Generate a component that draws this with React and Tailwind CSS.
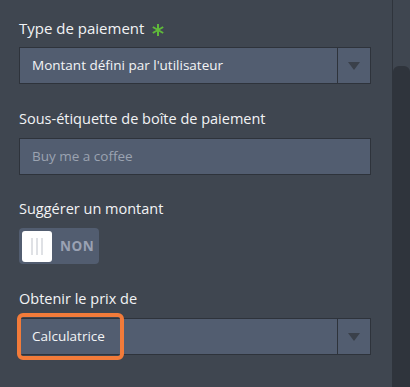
import React from "react"

const font = { fontFamily: '"Open Sans", "Noto Sans", sans-serif' }

function Arrow() {
  return (
    <div className="w-[33px] h-full border-l border-[#2e333b] flex items-center justify-center">
      <svg width="12" height="8" viewBox="0 0 12 8">
        <path d="M0 0h12L6 8z" fill="#3a404a" />
      </svg>
    </div>
  )
}

function Label({ children }) {
  return <div className="h-5 leading-5 text-[14.5px] text-[#f2f3f5] mb-[9px] flex items-center">{children}</div>
}

export default function App() {
  return (
    <div className="w-[410px] h-[387px] bg-[#3f4650] flex overflow-hidden" style={font}>
      <div className="w-[392px] pl-[19px] pr-[21px] pt-[18px]">
        {/* Type de paiement */}
        <Label>
          <span className="text-[15px]">Type de paiement</span>
          <svg className="ml-[8px] mt-[3px]" width="12" height="12" viewBox="0 0 12 12">
            <g stroke="#5fb93a" strokeWidth="2" strokeLinecap="butt">
              <path d="M6 0v12" />
              <path d="M0.8 3l10.4 6" />
              <path d="M0.8 9l10.4-6" />
            </g>
          </svg>
        </Label>
        <div className="h-[37px] bg-[#525d70] border border-[#2e333b] flex items-center">
          <div className="flex-1 pl-3 text-[13.5px] text-[#f3f4f6]">Montant défini par l'utilisateur</div>
          <Arrow />
        </div>

        {/* Sous-étiquette */}
        <div className="mt-[25px]">
          <Label>Sous-étiquette de boîte de paiement</Label>
          <div className="h-[37px] bg-[#525d70] border border-[#2e333b] flex items-center pl-3 text-[13.5px] text-[#9ba3b1]">
            Buy me a coffee
          </div>
        </div>

        {/* Suggérer */}
        <div className="mt-[24px]">
          <Label>Suggérer un montant</Label>
          <div className="w-20 h-9 bg-[#525d70] rounded-[4px] flex items-center px-[3px]">
            <div className="w-[30px] h-[31px] bg-white rounded-[3px] flex items-center justify-center gap-[3px]">
              <div className="w-[2px] h-[17px] bg-[#dfe1e5]" />
              <div className="w-[2px] h-[17px] bg-[#dfe1e5]" />
              <div className="w-[2px] h-[17px] bg-[#dfe1e5]" />
            </div>
            <div className="ml-[8px] text-[13.5px] font-bold tracking-[0.5px] text-[#9aa2b3]">NON</div>
          </div>
        </div>

        {/* Obtenir le prix */}
        <div className="mt-[25px]">
          <Label>Obtenir le prix de</Label>
          <div className="relative h-[37px] bg-[#525d70] border border-[#2e333b] flex items-center">
            <div className="flex-1 pl-3 text-[13.5px] text-[#f3f4f6]">Calculatrice</div>
            <Arrow />
            <div className="absolute left-[-3px] top-[-6px] w-[107px] h-[47px] border-4 border-[#f27b3a] rounded-[6px]" />
          </div>
        </div>
      </div>

      {/* Scrollbar */}
      <div className="w-[18px] h-full border-l border-[#2f343c] flex flex-col">
        <div className="h-[66px]" />
        <div className="flex-1 bg-[#2f343c] rounded-t-[6px]" />
      </div>
    </div>
  )
}
